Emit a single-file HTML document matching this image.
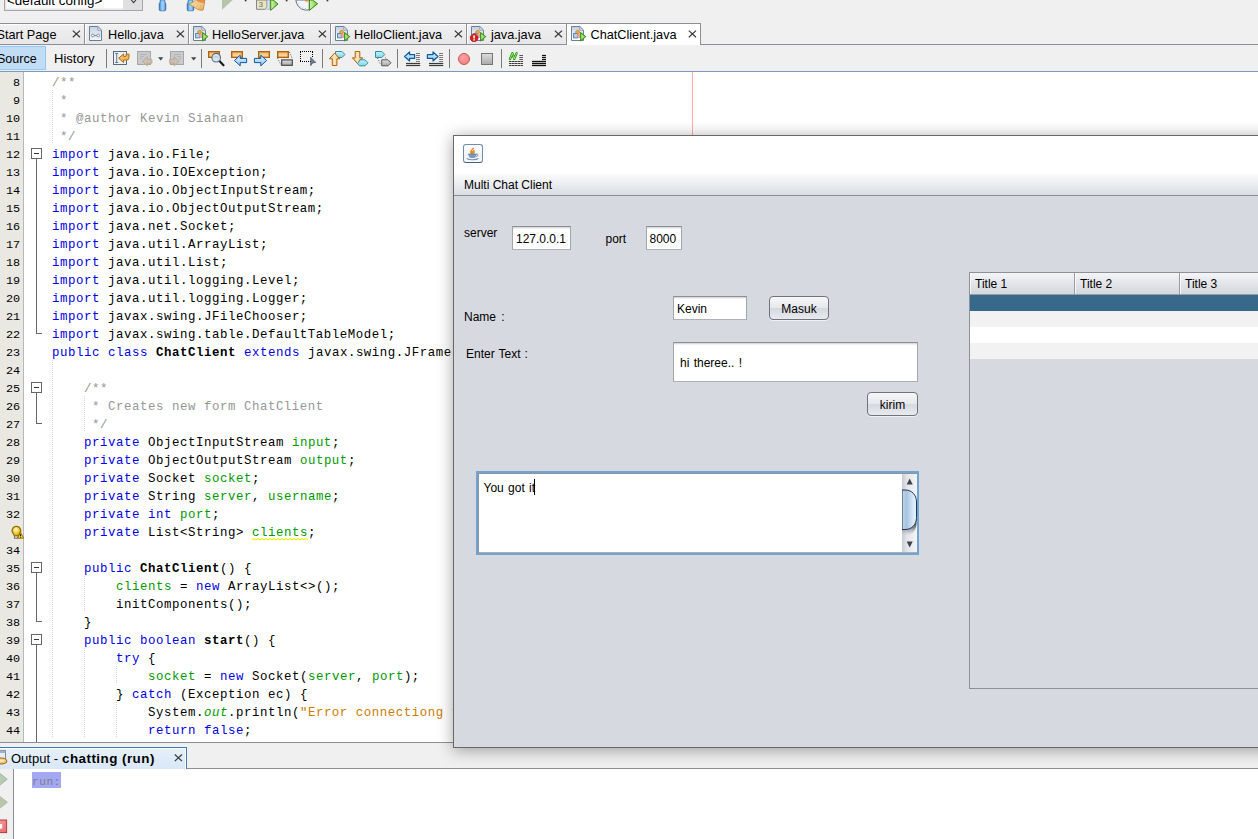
<!DOCTYPE html>
<html lang="en">
<head>
<meta charset="utf-8">
<title>ChatClient - NetBeans</title>
<style>
*{box-sizing:border-box;margin:0;padding:0}
html,body{width:1258px;height:839px;overflow:hidden;background:#f0f0f0}
body{position:relative;font-family:"Liberation Sans","DejaVu Sans",sans-serif;font-size:13px;color:#000}
.abs{position:absolute}
/* ---------- top toolbar ---------- */
#combo{position:absolute;left:4px;top:-13px;width:139px;height:24px;border:1px solid #a3a6ad;background:#fff;box-shadow:inset 0 0 0 1.5px #e6e6e6}
#combo .btn{position:absolute;right:0;top:0;width:19px;height:22px;background:#dfdfdf}
#combo .txt{position:absolute;left:2px;top:5px;font-size:13.4px;line-height:16px;white-space:nowrap;color:#000}
/* ---------- tabs ---------- */
#tabrow{position:absolute;left:0;top:23px;width:701px;height:22px;border-top:1px solid #8c8f98}
#tabline{position:absolute;left:0;top:44px;width:1258px;height:1px;background:#8c8f98}
.tab{position:absolute;top:24px;height:20px;border-right:1px solid #8c8f98;background:linear-gradient(#f1f1f1,#e7e7e7);box-shadow:inset 1px 1px 0 #fff;font-size:13px;line-height:20px;white-space:nowrap}
.tab.sel{background:#fff;height:21px;z-index:2;box-shadow:none}
.tab .t{position:absolute;top:0px}
.tab .x{position:absolute;top:6px;width:9px;height:8px}
svg.abs{z-index:3}
/* ---------- editor toolbar ---------- */
#etb{position:absolute;left:0;top:45px;width:1258px;height:26px;background:#f0f0f0}
#src{position:absolute;left:-1px;top:46px;width:47px;height:24px;background:#c2dcf3;border:1px solid #90c8f6;font-size:12.5px;line-height:24px}
#hist{position:absolute;left:54px;top:47px;height:24px;font-size:13px;line-height:24px}
.sep{position:absolute;top:49px;width:1px;height:19px;background:#7a7a7a}
#blueline{position:absolute;left:0;top:71px;width:1258px;height:1px;background:#7c9ab8}
/* ---------- editor ---------- */
#editor{position:absolute;left:0;top:72px;width:1258px;height:670px;background:#fff;overflow:hidden}
#gutterbg{position:absolute;left:0;top:72px;width:24px;height:670px;background:#e9e8e2;border-right:1px solid #b8b8b8}
#foldbg{position:absolute;left:23px;top:72px;width:24px;height:670px;background:#fff}
.no{position:absolute;left:0;width:20px;height:18px;text-align:right;font-family:"Liberation Mono",monospace;font-size:11.8px;line-height:18px;color:#000;letter-spacing:-.1px;margin-top:2px}
.ln{position:absolute;left:52px;height:18px;white-space:pre;font-family:"Liberation Mono",monospace;font-size:12.4px;letter-spacing:0.56px;line-height:18px;color:#000;margin-top:2px}
.k{color:#0000e6}.c{color:#969696}.f,.w{color:#009900}.s{color:#ce7b00}.b{font-weight:bold}.i{color:#009900;font-style:italic}
.fl{position:absolute;width:1px;background:#666}
.fh{position:absolute;width:6px;height:1px;background:#666}
.fb{position:absolute;width:11px;height:11px;border:1px solid #666;background:#fff}
.fb i{position:absolute;left:2px;top:4px;width:5px;height:1px;background:#333}
.ig{position:absolute;width:1px;background-image:linear-gradient(#d2d2d2 50%,transparent 50%);background-size:1px 2px}
#margin{position:absolute;left:692px;top:72px;width:1px;height:64px;background:#ffa9a9}
#edbottom{position:absolute;left:0;top:742px;width:1258px;height:1px;background:#8c8f98}
/* ---------- output ---------- */
#outline{position:absolute;left:0;top:768px;width:1258px;height:1px;background:#8c8f98}
#outtab{position:absolute;left:-1px;top:747px;width:188px;height:22px;border:1px solid #3b7bb9;border-bottom:none;background:linear-gradient(#e6f0fb,#d9e7f7);box-shadow:inset -1px 1px 0 #fff;font-size:13px;line-height:20px;white-space:nowrap}
#outtab .t{position:absolute;left:11px;top:1px}
#out{position:absolute;left:0;top:769px;width:1258px;height:70px;background:#fff}
#outside{position:absolute;left:0;top:769px;width:14px;height:70px;background:#f0f0f0;border-right:1px solid #8c8f98}
#run{position:absolute;left:32px;top:772px;width:29px;height:16px;background:#a3a8f3;color:#7e7e86;font-family:"Liberation Mono",monospace;font-size:11.2px;letter-spacing:.48px;line-height:16px;padding-top:2px;white-space:pre}
/* ---------- dialog ---------- */
#dlg{position:absolute;left:453px;top:135px;width:830px;height:613px;border:1px solid #686868;background:#d6d9df;box-shadow:0 2px 15px 0 rgba(0,0,0,.36);font-family:"Liberation Sans",sans-serif;font-size:12px;z-index:10}
#dlg .wtop{position:absolute;left:0;top:0;width:100%;height:38px;background:#fff}
#dlg .ttl{position:absolute;left:0;top:38px;width:100%;height:22px;background:linear-gradient(#fafbfb,#eceef1 45%,#d9dce2);border-bottom:1px solid #8c8f95}
#dlg .ttl span{position:absolute;left:10px;top:3px;line-height:16px}
.lbl{position:absolute;line-height:14px;white-space:nowrap}
.tf{position:absolute;background:#fff;border:1px solid #a3a6ad;border-top-color:#8b8e95;border-bottom-color:#adb0b7;line-height:14px;white-space:nowrap;box-shadow:inset 0 2px 2px -1px rgba(0,0,0,.2)}
.tf span{position:absolute;left:5px}
.bt{position:absolute;border:1px solid #6e737c;border-radius:4px;background:linear-gradient(#f6f7f9,#e6e8ec 50%,#d5d9df 51%,#e8eaee);text-align:center;white-space:nowrap;box-shadow:0 1px 0 rgba(255,255,255,.6)}
.tt{position:absolute;top:27px;height:16px;font-size:12.7px;line-height:16px;white-space:nowrap;z-index:3}
.jb{position:absolute;width:20px;height:19px;border:1px solid #6b8cad;border-bottom-color:#3f5f80;border-radius:3px;background:linear-gradient(#ffffff,#f1f1f1 70%,#fafafa)}
.ta{position:absolute;background:#fff;border:2px solid #73a4d1;box-shadow:inset 1px 1px 0 0 #90939a, inset 0 -1px 0 0 #a9acb3}
.caret{position:absolute;width:1px;height:16px;background:#000}
.sb{position:absolute;right:0;top:1px;width:15px;height:78px;background:linear-gradient(90deg,#c9ccd2,#e4e6ea 35%,#f3f4f6);overflow:hidden}
.sb svg{position:absolute;left:0;top:-1px}
.tbl{position:absolute;border:1px solid #8d9097;background:#d6d9df;overflow:hidden}
.th{position:absolute;top:0;height:21px;border-right:1px solid #9a9da3;background:linear-gradient(#f4f5f7,#e3e5e9 50%,#d4d7dd);padding-left:5px;line-height:21px;padding-top:1px;box-shadow:inset 1px 0 0 rgba(255,255,255,.7)}
.hl{position:absolute;left:0;top:21px;width:100%;height:1px;background:#9a9da3}
.r{position:absolute;left:0;width:100%;height:16px}
</style>
</head>
<body>
<!-- top toolbar -->
<div id="combo"><div class="txt">&lt;default config&gt;</div><div class="btn"></div></div>
<svg class="abs" style="left:120px;top:0" width="220" height="12" viewBox="120 0 220 12">
  <defs>
  <linearGradient id="hb" x1="0" y1="0" x2="1" y2="0"><stop offset="0" stop-color="#2d72ba"/><stop offset=".3" stop-color="#7fbdf0"/><stop offset=".55" stop-color="#a6d4f7"/><stop offset=".8" stop-color="#6fb0ea"/><stop offset="1" stop-color="#245fa6"/></linearGradient>
  <linearGradient id="br" x1="0" y1="0" x2="1" y2="1"><stop offset="0" stop-color="#fbe6bd"/><stop offset=".6" stop-color="#f3cd8c"/><stop offset="1" stop-color="#d9a24e"/></linearGradient>
  <linearGradient id="gp" x1="0" y1="0" x2="1" y2="0"><stop offset="0" stop-color="#d4f5b0"/><stop offset="1" stop-color="#7cc93a"/></linearGradient>
  </defs>
  <path d="M131.200 0l2.400 2.600 2.400-2.600" fill="none" stroke="#3a3a3a" stroke-width="1.100"/>
  <path d="M160.300 0h4.400q.3 2.500 1.200 4v5.300q0 1.600-1.300 1.600h-4.200q-1.300 0-1.300-1.600v-5.300q.9-1.500 1.200-4z" fill="url(#hb)" stroke="#1f5a9c" stroke-width=".5"/>
  <path d="M188.300 0h4.400q.3 2.500 1.200 4v5.300q0 1.600-1.300 1.600h-4.200q-1.300 0-1.300-1.600v-5.300q.9-1.500 1.200-4z" fill="url(#hb)" stroke="#1f5a9c" stroke-width=".5"/>
  <path d="M195.800 0h9l-.6 4.500-1 5.400q-2.600.9-5.300-.3l-8.500-5.400q3.800-1.600 6.400-4.200z" fill="url(#br)" stroke="#b47a22" stroke-width=".7" stroke-linejoin="round"/>
  <path d="M197 0h7.600l-.3 3.200q-3.600.2-7.500-1.700z" fill="#e67d3a" opacity=".75"/>
  <path d="M193.500 5.600l3-3.600M196.300 7.400l2.600-4.200M199.300 9l2-5" stroke="#dba85c" stroke-width=".7" fill="none"/>
  <path d="M222 9.700V0h10.800z" fill="#b5c5aa"/>
  <rect x="244.800" y="0" width="1.700" height="1.300" fill="#333"/>
  <path d="M256.500 0h10.600v7l-2.400 2.300h-8.200z" fill="#efe4b8" stroke="#6b7a94" stroke-width=".9"/>
  <path d="M267 0h3v9.300h-5.500l2.500-2.300z" fill="#d8dde6" stroke="#8d97a8" stroke-width=".5"/>
  <text x="258.600" y="7.400" font-family="Liberation Sans,sans-serif" font-size="8" fill="#566a8e">3</text>
  <path d="M270.700 0h2.300l5 4-7.300 6.300z" fill="url(#gp)" stroke="#2a8a10" stroke-width="1" stroke-linejoin="round"/>
  <rect x="285.800" y="0" width="1.700" height="1.300" fill="#333"/>
  <path d="M295.900 0q.3 3.600 2.300 6.200 2.800 3.600 7.300 3.900l3.800-.2V0z" fill="#f0f5fb" stroke="#66768e" stroke-width="1"/>
  <path d="M297.800 4l.9-.4M299.800 6.600l.7-.7M302.500 8.400l.4-.9M305.500 9l0-1" stroke="#8a97ab" stroke-width=".6"/>
  <circle cx="306.600" cy=".2" r="1.500" fill="#f08a2c"/>
  <path d="M309.400 0h3l5.200 3.700-8.200 6.700z" fill="url(#gp)" stroke="#2a8a10" stroke-width="1" stroke-linejoin="round"/>
  <rect x="326.600" y="0" width="1.700" height="1.300" fill="#333"/>
</svg>

<!-- tab row -->
<div id="tabrow"></div>
<div id="tabline"></div>
<div class="tab" style="left:-1px;width:86px"></div>
<div class="tt" style="left:-3.5px">Start Page</div>
<svg class="abs" style="left:71.5px;top:30px" width="9" height="8" viewBox="0 0 9 8"><path d="M.8.6l7.2 6.6M8 .6L.8 7.2" stroke="#3c3c3c" stroke-width="1.25" fill="none"/></svg>
<div class="tab" style="left:85px;width:104px"></div>
<svg class="abs" style="left:89px;top:25px;overflow:visible" width="17" height="18" viewBox="0 0 17 18"><defs><linearGradient id="pp89" x1="0" y1="0" x2="0" y2="1"><stop offset="0" stop-color="#c5d3e6"/><stop offset="1" stop-color="#f4f7fb"/></linearGradient></defs><path d="M.5 1.500h8.300l3.700 3.700v10.300h-12z" fill="url(#pp89)" stroke="#6c7d92"/><path d="M8.800 1.500v3.700h3.700z" fill="#f0f4f9" stroke="#7c8da3" stroke-width=".8" stroke-linejoin="miter"/><circle cx="3.9" cy="10.5" r="1.4" fill="#fff" stroke="#6a7b92" stroke-width=".8"/><circle cx="9.2" cy="10.5" r="1.4" fill="#fff" stroke="#6a7b92" stroke-width=".8"/><path d="M5.3 10.5h2.5" stroke="#6a7b92" stroke-width=".9"/></svg>
<div class="tt" style="left:108.0px">Hello.java</div>
<svg class="abs" style="left:175.5px;top:30px" width="9" height="8" viewBox="0 0 9 8"><path d="M.8.6l7.2 6.6M8 .6L.8 7.2" stroke="#3c3c3c" stroke-width="1.25" fill="none"/></svg>
<div class="tab" style="left:189px;width:142px"></div>
<svg class="abs" style="left:193px;top:25px;overflow:visible" width="17" height="18" viewBox="0 0 17 18"><defs><linearGradient id="pg193" x1="0" y1="0" x2="0" y2="1"><stop offset="0" stop-color="#bccde2"/><stop offset=".75" stop-color="#ffffff"/></linearGradient></defs><path d="M.5 1.500h8.300l3.700 3.700v10.300h-12z" fill="url(#pg193)" stroke="#6d7f94"/><path d="M8.800 1.500v3.700h3.700z" fill="#edf2f8" stroke="#7c8da3" stroke-width=".8" stroke-linejoin="miter"/><rect x="2.6" y="8.5" width="4.2" height="4.4" fill="#aed4f0" stroke="#4d7fae" stroke-width=".9"/><path d="M6.600 4.900l2.200 2.200-2.200 2.200-2.200-2.200z" fill="#e9ad45" stroke="#bd7a12" stroke-width=".8"/><circle cx="8" cy="10.8" r="1.9" fill="#f2a3a3" stroke="#e08585" stroke-width=".5"/><path d="M9.6 7.6l5 4-5 4.2z" fill="#a6e07c" stroke="#3f921d" stroke-width="1.1" stroke-linejoin="round"/></svg>
<div class="tt" style="left:212.0px">HelloServer.java</div>
<svg class="abs" style="left:317.5px;top:30px" width="9" height="8" viewBox="0 0 9 8"><path d="M.8.6l7.2 6.6M8 .6L.8 7.2" stroke="#3c3c3c" stroke-width="1.25" fill="none"/></svg>
<div class="tab" style="left:331px;width:136px"></div>
<svg class="abs" style="left:335px;top:25px;overflow:visible" width="17" height="18" viewBox="0 0 17 18"><defs><linearGradient id="pg335" x1="0" y1="0" x2="0" y2="1"><stop offset="0" stop-color="#bccde2"/><stop offset=".75" stop-color="#ffffff"/></linearGradient></defs><path d="M.5 1.500h8.300l3.700 3.700v10.300h-12z" fill="url(#pg335)" stroke="#6d7f94"/><path d="M8.800 1.500v3.700h3.700z" fill="#edf2f8" stroke="#7c8da3" stroke-width=".8" stroke-linejoin="miter"/><rect x="2.6" y="8.5" width="4.2" height="4.4" fill="#aed4f0" stroke="#4d7fae" stroke-width=".9"/><path d="M6.600 4.900l2.200 2.200-2.200 2.200-2.200-2.200z" fill="#e9ad45" stroke="#bd7a12" stroke-width=".8"/><circle cx="8" cy="10.8" r="1.9" fill="#f2a3a3" stroke="#e08585" stroke-width=".5"/><path d="M9.6 7.6l5 4-5 4.2z" fill="#a6e07c" stroke="#3f921d" stroke-width="1.1" stroke-linejoin="round"/></svg>
<div class="tt" style="left:354.0px">HelloClient.java</div>
<svg class="abs" style="left:453.5px;top:30px" width="9" height="8" viewBox="0 0 9 8"><path d="M.8.6l7.2 6.6M8 .6L.8 7.2" stroke="#3c3c3c" stroke-width="1.25" fill="none"/></svg>
<div class="tab" style="left:467px;width:100px"></div>
<svg class="abs" style="left:471px;top:25px;overflow:visible" width="17" height="18" viewBox="0 0 17 18"><defs><linearGradient id="pg471" x1="0" y1="0" x2="0" y2="1"><stop offset="0" stop-color="#bccde2"/><stop offset=".75" stop-color="#ffffff"/></linearGradient></defs><path d="M.5 1.500h8.300l3.700 3.700v10.300h-12z" fill="url(#pg471)" stroke="#6d7f94"/><path d="M8.800 1.500v3.700h3.700z" fill="#edf2f8" stroke="#7c8da3" stroke-width=".8" stroke-linejoin="miter"/><rect x="2.6" y="8.5" width="4.2" height="4.4" fill="#aed4f0" stroke="#4d7fae" stroke-width=".9"/><path d="M6.600 4.900l2.200 2.200-2.200 2.200-2.200-2.200z" fill="#e9ad45" stroke="#bd7a12" stroke-width=".8"/><circle cx="8" cy="10.8" r="1.9" fill="#f2a3a3" stroke="#e08585" stroke-width=".5"/><path d="M9.6 7.6l5 4-5 4.2z" fill="#a6e07c" stroke="#3f921d" stroke-width="1.1" stroke-linejoin="round"/><path d="M1.500 9.300h3.200l2.100 2.100v3l-2.100 2.100h-3.200l-2.100-2.100v-3z" fill="#d92020" stroke="#9c0d0d" stroke-width=".7"/><rect x="2.300" y="10.400" width="1.600" height="3" fill="#fff"/><rect x="2.300" y="14.200" width="1.600" height="1.300" fill="#fff"/></svg>
<div class="tt" style="left:491.0px">java.java</div>
<svg class="abs" style="left:553.8px;top:30px" width="9" height="8" viewBox="0 0 9 8"><path d="M.8.6l7.2 6.6M8 .6L.8 7.2" stroke="#3c3c3c" stroke-width="1.25" fill="none"/></svg>
<div class="tab sel" style="left:567px;width:134px"></div>
<svg class="abs" style="left:571px;top:25px;overflow:visible" width="17" height="18" viewBox="0 0 17 18"><defs><linearGradient id="pg571" x1="0" y1="0" x2="0" y2="1"><stop offset="0" stop-color="#bccde2"/><stop offset=".75" stop-color="#ffffff"/></linearGradient></defs><path d="M.5 1.500h8.300l3.700 3.700v10.300h-12z" fill="url(#pg571)" stroke="#6d7f94"/><path d="M8.800 1.500v3.700h3.700z" fill="#edf2f8" stroke="#7c8da3" stroke-width=".8" stroke-linejoin="miter"/><rect x="2.6" y="8.5" width="4.2" height="4.4" fill="#aed4f0" stroke="#4d7fae" stroke-width=".9"/><path d="M6.600 4.900l2.200 2.200-2.200 2.200-2.200-2.200z" fill="#e9ad45" stroke="#bd7a12" stroke-width=".8"/><circle cx="8" cy="10.8" r="1.9" fill="#f2a3a3" stroke="#e08585" stroke-width=".5"/><path d="M9.6 7.6l5 4-5 4.2z" fill="#a6e07c" stroke="#3f921d" stroke-width="1.1" stroke-linejoin="round"/></svg>
<div class="tt" style="left:590.5px">ChatClient.java</div>
<svg class="abs" style="left:688.0px;top:30px" width="9" height="8" viewBox="0 0 9 8"><path d="M.8.6l7.2 6.6M8 .6L.8 7.2" stroke="#3c3c3c" stroke-width="1.25" fill="none"/></svg>

<!-- editor toolbar -->
<div id="etb"></div>
<div id="src"><span style="position:absolute;left:-3px">Source</span></div>
<div id="hist">History</div>
<div class="sep" style="left:106px"></div>
<div class="sep" style="left:201px"></div>
<div class="sep" style="left:322px"></div>
<div class="sep" style="left:397px"></div>
<div class="sep" style="left:449px"></div>
<div class="sep" style="left:501px"></div>
<svg class="abs" style="left:100px;top:46px" width="460" height="24" viewBox="100 46 460 24"><defs>
<linearGradient id="or" x1="0" y1="0" x2="0" y2="1"><stop offset="0" stop-color="#f3b562"/><stop offset="1" stop-color="#fbe2bd"/></linearGradient>
<linearGradient id="bl" x1="0" y1="0" x2="0" y2="1"><stop offset="0" stop-color="#e6f3fd"/><stop offset="1" stop-color="#8fc6f2"/></linearGradient>
<linearGradient id="gy" x1="0" y1="0" x2="0" y2="1"><stop offset="0" stop-color="#dedede"/><stop offset="1" stop-color="#a9a9a9"/></linearGradient>
<linearGradient id="cy" x1="0" y1="0" x2="0" y2="1"><stop offset="0" stop-color="#c9f0f7"/><stop offset="1" stop-color="#84d3e6"/></linearGradient>
<linearGradient id="oa" x1="0" y1="0" x2="1" y2="0"><stop offset="0" stop-color="#f3b562"/><stop offset=".5" stop-color="#fde6c4"/><stop offset="1" stop-color="#f0a94c"/></linearGradient>
</defs><rect x="113.500" y="51.500" width="13" height="13" fill="#e9f2fb" stroke="#4c5b72" stroke-width=".9"/><path d="M115.200 53.500h3M115.200 62.500h3M116.700 53.500v9" stroke="#4c5b72" stroke-width=".8" fill="none"/><path d="M118.600 58.200l5-4.300v2.500h2.400v-2.200h3v3.400q0 2.400-2.400 2.400h-3v2.600z" fill="#f6b763" stroke="#b06a10" stroke-width="1" stroke-linejoin="round"/><rect x="137.500" y="51.500" width="13" height="13" fill="#c9cacc" stroke="#a6a7a9"/><path d="M140 54.500h7M140 56.500h4M140 58.500h2" stroke="#b4b5b7" stroke-width="1"/><path d="M142.300 61.300l5-4.500v2.600h4.600v3.800h-4.600v2.600z" fill="#cdbfae" stroke="#b3a595" stroke-width=".8" stroke-linejoin="round"/><path d="M158 57.200h5.400l-2.700 3.200z" fill="#3a4656"/><rect x="170.500" y="51.500" width="13" height="13" fill="#c9cacc" stroke="#a6a7a9"/><path d="M174 54.500h7M177 56.500h4M179 58.500h2" stroke="#b4b5b7" stroke-width="1"/><path d="M179.200 61.300l-5-4.500v2.600h-4.600v3.800h4.600v2.600z" fill="#cdbfae" stroke="#b3a595" stroke-width=".8" stroke-linejoin="round"/><path d="M191 57.200h5.400l-2.700 3.200z" fill="#3a4656"/><rect x="208.700" y="51.700" width="10.600" height="5.600" fill="url(#or)" stroke="#b0640a" stroke-width="1.400"/><path d="M219 60.500l4.500 4.800" stroke="#1e1e1e" stroke-width="2.200" stroke-linecap="round"/><circle cx="216.200" cy="57.700" r="4.300" fill="#d3e6f6" fill-opacity=".92" stroke="#5a6a80" stroke-width="1.100"/><path d="M213.500 57h5.400" stroke="#b9c6d6" stroke-width="1"/><rect x="231.700" y="51.700" width="10.600" height="5.600" fill="url(#or)" stroke="#b0640a" stroke-width="1.400"/><path d="M234.400 60.500l5.800-5.300v3.200h6.400v4.200h-6.400v3.200z" fill="url(#bl)" stroke="#0d57a4" stroke-width="1" stroke-linejoin="round"/><rect x="258.700" y="51.700" width="10.600" height="5.600" fill="url(#or)" stroke="#b0640a" stroke-width="1.400"/><path d="M266.600 60.500l-5.800-5.300v3.200h-6.400v4.200h6.400v3.200z" fill="url(#bl)" stroke="#0d57a4" stroke-width="1" stroke-linejoin="round"/><path d="M289.500 52l3 7M277.500 58l3.500 7" stroke="#555" stroke-width="1" stroke-dasharray="1 1.500" fill="none"/><rect x="277.700" y="51.700" width="10.600" height="5.600" fill="url(#or)" stroke="#b0640a" stroke-width="1.400"/><rect x="281.700" y="59.900" width="10.600" height="5.400" fill="url(#gy)" stroke="#4a4a4a" stroke-width="1.200"/><path d="M300 51.500h13M300 61.500h11M300.500 52v10M312.500 52v6" fill="none" stroke="#000" stroke-width="1" stroke-dasharray="1 1"/><path d="M310.600 57.200l5.200 5.200-3 .5-2.200 2.900z" fill="#6a7b91" stroke="#2e3b4d" stroke-width=".5"/><path d="M335.500 51.500h6.500l3 3-3 3h-6.500z" fill="url(#cy)" stroke="#2d90a8" stroke-width="1"/><path d="M334.600 53l5.200 5.800h-2.900v6.700h-4.600v-6.700h-2.900z" fill="url(#oa)" stroke="#b0640a" stroke-width="1" stroke-linejoin="round"/><path d="M355.200 51.500h4.600v6.300h2.900l-5.200 5.800-5.200-5.800h2.900z" fill="url(#oa)" stroke="#b0640a" stroke-width="1" stroke-linejoin="round"/><path d="M360 59.800h5l3 3-3 3h-5.500l-2-2.200z" fill="url(#cy)" stroke="#2d90a8" stroke-width="1"/><path d="M377.500 58l3 6.500M385.500 57.500l1 2.500" stroke="#555" stroke-width="1" stroke-dasharray="1 1.500" fill="none"/><path d="M375.500 51.500h6.300l3 3-3 3h-6.300z" fill="url(#cy)" stroke="#2d90a8" stroke-width="1"/><path d="M381.700 59.800h6.300l3 3-3 3h-6.300z" fill="url(#gy)" stroke="#5a5a5a" stroke-width="1"/><path d="M404.600 56.500l5-4.500v2.600h5v3.800h-5v2.600z" fill="url(#bl)" stroke="#0b5c9c" stroke-width="1.200" stroke-linejoin="round"/><path d="M416.200 53.5h4" stroke="#555" stroke-width="1" stroke-dasharray="1.500 .5"/><path d="M416.200 55.5h4" stroke="#555" stroke-width="1" stroke-dasharray="1.500 .5"/><path d="M416.200 57.5h4" stroke="#555" stroke-width="1" stroke-dasharray="1.500 .5"/><path d="M416.200 59.5h4" stroke="#555" stroke-width="1" stroke-dasharray="1.500 .5"/><path d="M416.200 61.5h4" stroke="#555" stroke-width="1" stroke-dasharray="1.500 .5"/><path d="M406 63.5h14.200" stroke="#3a3a3a" stroke-width="1.200"/><path d="M406 65.5h14.200" stroke="#3a3a3a" stroke-width="1.200"/><path d="M438 56.500l-5-4.500v2.600h-5.600v3.800h5.600v2.600z" fill="url(#bl)" stroke="#0b5c9c" stroke-width="1.200" stroke-linejoin="round"/><path d="M439.300 53.5h4" stroke="#555" stroke-width="1" stroke-dasharray="1.500 .5"/><path d="M439.300 55.5h4" stroke="#555" stroke-width="1" stroke-dasharray="1.500 .5"/><path d="M439.300 57.5h4" stroke="#555" stroke-width="1" stroke-dasharray="1.500 .5"/><path d="M439.300 59.5h4" stroke="#555" stroke-width="1" stroke-dasharray="1.500 .5"/><path d="M439.300 61.5h4" stroke="#555" stroke-width="1" stroke-dasharray="1.500 .5"/><path d="M429 63.5h14.300" stroke="#3a3a3a" stroke-width="1.200"/><path d="M429 65.5h14.300" stroke="#3a3a3a" stroke-width="1.200"/><defs><radialGradient id="rd" cx=".4" cy=".35" r=".7"><stop offset="0" stop-color="#ffa3a3"/><stop offset="1" stop-color="#f47c7c"/></radialGradient></defs><circle cx="464" cy="59" r="5.500" fill="url(#rd)" stroke="#c45a5a" stroke-width="1"/><rect x="481.500" y="53.500" width="11" height="11" fill="url(#gy)" stroke="#767676" stroke-width="1"/><path d="M510 59l2.400-5.800 1.800 5.800 2.400-5.800" fill="none" stroke="#1c9a00" stroke-width="2.300" stroke-linejoin="round" stroke-linecap="round"/><path d="M510 59l2.400-5.800 1.800 5.800 2.400-5.800" fill="none" stroke="#d4f8b0" stroke-width=".7" stroke-linejoin="round" stroke-linecap="round"/><path d="M519.300 55.5h3.700" stroke="#555" stroke-width="1"/><path d="M519.300 57.5h3.700" stroke="#555" stroke-width="1"/><path d="M519.300 59.5h3.700" stroke="#555" stroke-width="1"/><path d="M509 61.5h14" stroke="#3a3a3a" stroke-width="1.200" stroke-dasharray="2.500 .4"/><path d="M509 63.5h14" stroke="#3a3a3a" stroke-width="1.200" stroke-dasharray="2.500 .4"/><path d="M509 65.5h14" stroke="#3a3a3a" stroke-width="1.200" stroke-dasharray="2.500 .4"/><path d="M542 55.5h4" stroke="#111" stroke-width="1.200"/><path d="M542 57.5h4" stroke="#111" stroke-width="1.200"/><path d="M542 59.5h4" stroke="#111" stroke-width="1.200"/><path d="M532 61.5h14" stroke="#111" stroke-width="1.300"/><path d="M532 63.5h14" stroke="#111" stroke-width="1.300"/><path d="M532 65.5h14" stroke="#111" stroke-width="1.300"/></svg>
<div id="blueline"></div>

<!-- editor -->
<div id="editor"></div>
<div id="gutterbg"></div>
<div class="ig" style="left:52px;top:90px;height:54px"></div>
<div class="ig" style="left:52px;top:360px;height:378px"></div>
<div class="ig" style="left:84px;top:396px;height:36px"></div>
<div class="ig" style="left:84px;top:576px;height:36px"></div>
<div class="ig" style="left:84px;top:648px;height:90px"></div>
<div class="ig" style="left:116px;top:666px;height:18px"></div>
<div class="ig" style="left:116px;top:702px;height:36px"></div>
<div class="no" style="top:72px">8</div>
<div class="no" style="top:90px">9</div>
<div class="no" style="top:108px">10</div>
<div class="no" style="top:126px">11</div>
<div class="no" style="top:144px">12</div>
<div class="no" style="top:162px">13</div>
<div class="no" style="top:180px">14</div>
<div class="no" style="top:198px">15</div>
<div class="no" style="top:216px">16</div>
<div class="no" style="top:234px">17</div>
<div class="no" style="top:252px">18</div>
<div class="no" style="top:270px">19</div>
<div class="no" style="top:288px">20</div>
<div class="no" style="top:306px">21</div>
<div class="no" style="top:324px">22</div>
<div class="no" style="top:342px">23</div>
<div class="no" style="top:360px">24</div>
<div class="no" style="top:378px">25</div>
<div class="no" style="top:396px">26</div>
<div class="no" style="top:414px">27</div>
<div class="no" style="top:432px">28</div>
<div class="no" style="top:450px">29</div>
<div class="no" style="top:468px">30</div>
<div class="no" style="top:486px">31</div>
<div class="no" style="top:504px">32</div>
<div class="no" style="top:540px">34</div>
<div class="no" style="top:558px">35</div>
<div class="no" style="top:576px">36</div>
<div class="no" style="top:594px">37</div>
<div class="no" style="top:612px">38</div>
<div class="no" style="top:630px">39</div>
<div class="no" style="top:648px">40</div>
<div class="no" style="top:666px">41</div>
<div class="no" style="top:684px">42</div>
<div class="no" style="top:702px">43</div>
<div class="no" style="top:720px">44</div>
<svg class="abs" style="left:10px;top:525px" width="15" height="15" viewBox="10 524 15 15">
<defs><radialGradient id="bg" cx=".45" cy=".35" r=".65"><stop offset="0" stop-color="#fffbe0"/><stop offset=".45" stop-color="#f7d64a"/><stop offset="1" stop-color="#d6a40c"/></radialGradient></defs>
<rect x="14.500" y="534" width="3.500" height="3.200" fill="#d9dde6" stroke="#4c566b" stroke-width=".8"/>
<path d="M16.400 525.400a4.300 4.300 0 0 1 3.100 7.300l-1 2h-4.200l-1-2a4.300 4.300 0 0 1 3.100-7.300z" fill="url(#bg)" stroke="#8f6c04" stroke-width="1.100"/>
<path d="M20.600 531.300l3 5.900h-6z" fill="#ffe51e" stroke="#8a6a00" stroke-width=".9" stroke-linejoin="round"/>
<path d="M20.600 533.200v2.200M20.600 536v.7" stroke="#111" stroke-width="1"/>
</svg>
<div class="fl" style="left:36px;top:158px;height:175px"></div>
<div class="fh" style="left:36px;top:333px"></div>
<div class="fb" style="left:31px;top:148px"><i></i></div>
<div class="fl" style="left:36px;top:392px;height:31px"></div>
<div class="fh" style="left:36px;top:423px"></div>
<div class="fb" style="left:31px;top:382px"><i></i></div>
<div class="fl" style="left:36px;top:572px;height:49px"></div>
<div class="fh" style="left:36px;top:621px"></div>
<div class="fb" style="left:31px;top:562px"><i></i></div>
<div class="fl" style="left:36px;top:644px;height:98px"></div>
<div class="fb" style="left:31px;top:634px"><i></i></div>
<div class="ln" style="top:72px"><span class="c">/**</span></div>
<div class="ln" style="top:90px"><span class="c"> *</span></div>
<div class="ln" style="top:108px"><span class="c"> * @author Kevin Siahaan</span></div>
<div class="ln" style="top:126px"><span class="c"> */</span></div>
<div class="ln" style="top:144px"><span class="k">import</span> java.io.File;</div>
<div class="ln" style="top:162px"><span class="k">import</span> java.io.IOException;</div>
<div class="ln" style="top:180px"><span class="k">import</span> java.io.ObjectInputStream;</div>
<div class="ln" style="top:198px"><span class="k">import</span> java.io.ObjectOutputStream;</div>
<div class="ln" style="top:216px"><span class="k">import</span> java.net.Socket;</div>
<div class="ln" style="top:234px"><span class="k">import</span> java.util.ArrayList;</div>
<div class="ln" style="top:252px"><span class="k">import</span> java.util.List;</div>
<div class="ln" style="top:270px"><span class="k">import</span> java.util.logging.Level;</div>
<div class="ln" style="top:288px"><span class="k">import</span> java.util.logging.Logger;</div>
<div class="ln" style="top:306px"><span class="k">import</span> javax.swing.JFileChooser;</div>
<div class="ln" style="top:324px"><span class="k">import</span> javax.swing.table.DefaultTableModel;</div>
<div class="ln" style="top:342px"><span class="k">public class</span> <span class="b">ChatClient</span> <span class="k">extends</span> javax.swing.JFrame {</div>
<div class="ln" style="top:360px"></div>
<div class="ln" style="top:378px"><span class="c">    /**</span></div>
<div class="ln" style="top:396px"><span class="c">     * Creates new form ChatClient</span></div>
<div class="ln" style="top:414px"><span class="c">     */</span></div>
<div class="ln" style="top:432px">    <span class="k">private</span> ObjectInputStream <span class="f">input</span>;</div>
<div class="ln" style="top:450px">    <span class="k">private</span> ObjectOutputStream <span class="f">output</span>;</div>
<div class="ln" style="top:468px">    <span class="k">private</span> Socket <span class="f">socket</span>;</div>
<div class="ln" style="top:486px">    <span class="k">private</span> String <span class="f">server</span>, <span class="f">username</span>;</div>
<div class="ln" style="top:504px">    <span class="k">private int</span> <span class="f">port</span>;</div>
<div class="ln" style="top:522px">    <span class="k">private</span> List&lt;String&gt; <span class="w">clients</span>;</div>
<div class="ln" style="top:540px"></div>
<div class="ln" style="top:558px">    <span class="k">public</span> <span class="b">ChatClient</span>() {</div>
<div class="ln" style="top:576px">        <span class="f">clients</span> = <span class="k">new</span> ArrayList&lt;&gt;();</div>
<div class="ln" style="top:594px">        initComponents();</div>
<div class="ln" style="top:612px">    }</div>
<div class="ln" style="top:630px">    <span class="k">public boolean</span> <span class="b">start</span>() {</div>
<div class="ln" style="top:648px">        <span class="k">try</span> {</div>
<div class="ln" style="top:666px">            <span class="f">socket</span> = <span class="k">new</span> Socket(<span class="f">server</span>, <span class="f">port</span>);</div>
<div class="ln" style="top:684px">        } <span class="k">catch</span> (Exception ec) {</div>
<div class="ln" style="top:702px">            System.<span class="i">out</span>.println(<span class="s">"Error connectiong to server:"</span> + ec);</div>
<div class="ln" style="top:720px">            <span class="k">return false</span>;</div>
<svg class="abs" style="left:252px;top:538px" width="57" height="3" viewBox="0 0 57 3"><polyline points="0,1.9 2,0.6 4,1.9 6,0.6 8,1.9 10,0.6 12,1.9 14,0.6 16,1.9 18,0.6 20,1.9 22,0.6 24,1.9 26,0.6 28,1.9 30,0.6 32,1.9 34,0.6 36,1.9 38,0.6 40,1.9 42,0.6 44,1.9 46,0.6 48,1.9 50,0.6 52,1.9 54,0.6 56,1.9" fill="none" stroke="#f4ee00" stroke-width="1.100"/></svg>
<div id="margin"></div>
<div id="edbottom"></div>

<!-- output -->
<div id="out"></div>
<div id="outside"></div>
<div id="outline"></div>
<div id="outtab"><span class="t">Output - <b style="font-size:13.4px;letter-spacing:.46px;margin-left:.5px">chatting (run)</b></span></div>
<div id="run">run:</div>
<svg class="abs" style="left:173.5px;top:754px;z-index:5" width="9" height="8" viewBox="0 0 9 8"><path d="M.8.500l7.200 6.600M8 .500L.8 7.100" stroke="#3c3c3c" stroke-width="1.250" fill="none"/></svg>
<svg class="abs" style="left:0;top:748px;z-index:4" width="14" height="91" viewBox="0 748 14 91"><rect x="-6" y="750.500" width="11.500" height="9" fill="#e8edf3" stroke="#7b8794" stroke-width="1"/><rect x="-6" y="750.500" width="11.500" height="2.500" fill="#9fb0c4"/><ellipse cx="1.500" cy="761" rx="5.300" ry="3" fill="#f3c77a" stroke="#a86a12" stroke-width="1.100"/><ellipse cx="1.500" cy="760.700" rx="2.600" ry="1" fill="#fbe9c8"/><path d="M-1.500 772.300l8.700 7-8.700 7z" fill="#b9c9b2" stroke="#8db58a" stroke-width=".8"/><path d="M-1.500 795.300l8.900 7-8.900 7z" fill="#bcc4aa" stroke="#a9b59a" stroke-width=".8"/><defs><linearGradient id="rs" x1="0" y1="0" x2="1" y2="1"><stop offset="0" stop-color="#fba5a5"/><stop offset="1" stop-color="#e76a6a"/></linearGradient></defs><rect x="-6" y="820" width="12.600" height="12.600" fill="url(#rs)" stroke="#ad4040" stroke-width="1"/><rect x="-3" y="824" width="5.200" height="4.600" fill="#fff"/></svg>

<!-- dialog -->
<div id="dlg">
  <div class="wtop"></div>
  <div class="ttl"><span>Multi Chat Client</span></div>
<div class="jb" style="left:9px;top:8px"></div>
<svg class="abs" style="left:9px;top:8px" width="20" height="19" viewBox="0 0 20 19"><path d="M10.300 3.400c1.700 1.100.2 2.100 1.300 3.200 1.200 1.200.1 2.400-.9 3.600h-2.600c-1.600-1.500-1.300-3-.1-4.300 1.100-1.200 1.300-1.600 2.300-2.500z" fill="#e98a2d"/><circle cx="9.600" cy="6.500" r=".55" fill="#fff"/><circle cx="10.600" cy="5.500" r=".5" fill="#fff"/><circle cx="11.300" cy="7.400" r=".4" fill="#fff" opacity=".8"/><path d="M5.400 10.300h8c-.3 2.400-1.300 3.700-2.500 3.700h-3c-1.300 0-2.300-1.400-2.500-3.700z" fill="#7b9bbd"/><path d="M5 10.200h8.800" stroke="#5c80a8" stroke-width="1"/><path d="M13.300 10.300c2.200-.8 2.500 1.500-.5 2.500" fill="none" stroke="#6f91b6" stroke-width=".9"/><path d="M3.800 14.500c2.400 1.700 9.400 1.700 11.600 0" fill="none" stroke="#6f91b6" stroke-width="1.100"/></svg>
<div class="lbl" style="left:10.0px;top:90.0px;">server</div>
<div class="lbl" style="left:151.5px;top:96.0px;">port</div>
<div class="lbl" style="left:10.0px;top:173.5px;word-spacing:2px">Name :</div>
<div class="lbl" style="left:12.0px;top:211.0px;word-spacing:.7px">Enter Text :</div>
<div class="tf" style="left:58px;top:90px;width:59px;height:24px"><span style="left:3.0px;top:5.0px">127.0.0.1</span></div>
<div class="tf" style="left:192px;top:90px;width:36px;height:24px"><span style="left:2.5px;top:5.0px">8000</span></div>
<div class="tf" style="left:219px;top:160px;width:74px;height:24px"><span style="left:3.0px;top:4.6px">Kevin</span></div>
<div class="tf" style="left:219px;top:206px;width:245px;height:40px"><span style="left:6.0px;top:13.0px"><span style="position:static;word-spacing:1px">hi theree.. !</span></span></div>
<div class="bt" style="left:315px;top:160px;width:60px;height:24px;line-height:22px;padding-top:1px">Masuk</div>
<div class="bt" style="left:413px;top:256px;width:51px;height:24px;line-height:22px;padding-top:1px">kirim</div>
<div class="ta" style="left:22px;top:335px;width:443px;height:84px">
<span style="position:absolute;left:5.5px;top:8.0px;line-height:14px;word-spacing:1px">You got it</span>
<i class="caret" style="left:56px;top:6px"></i>
<div class="sb"><svg width="15" height="80" viewBox="0 0 15 80"><defs><linearGradient id="th" x1="0" y1="0" x2="1" y2="0"><stop offset="0" stop-color="#c4d7ea"/><stop offset=".3" stop-color="#a8c3df"/><stop offset=".75" stop-color="#d4e8f6"/><stop offset="1" stop-color="#e9f6fc"/></linearGradient><linearGradient id="sh" x1="0" y1="0" x2="0" y2="1"><stop offset="0" stop-color="#2f3338"/><stop offset=".5" stop-color="#7d8188"/><stop offset="1" stop-color="#d9dbe0" stop-opacity="0"/></linearGradient></defs><path d="M4.700 11.400h6l-3-5.900z" fill="#3f4145"/><path d="M0 56.500c8 0 14-4 14.500-12v7q-1 11-14.500 12.500z" fill="url(#sh)"/><path d="M0 17h3c7 0 11.500 5 11.500 12v15.500c0 7-4.500 12-11.500 12h-3z" fill="url(#th)" stroke="#1c3557" stroke-width="1"/><path d="M4.700 68.400h6l-3 6z" fill="#3f4145"/></svg></div>
</div>
<div class="tbl" style="left:515px;top:136px;width:400px;height:417px">
<div class="th" style="left:0;width:105px">Title 1</div><div class="th" style="left:105px;width:105px">Title 2</div><div class="th" style="left:210px;width:200px">Title 3</div>
<div class="hl"></div>
<div class="r" style="top:22px;background:#39698a"></div><div class="r" style="top:38px;background:#f2f2f2"></div><div class="r" style="top:54px;background:#fff"></div><div class="r" style="top:70px;background:#f2f2f2"></div>
</div>
</div>
</body>
</html>
